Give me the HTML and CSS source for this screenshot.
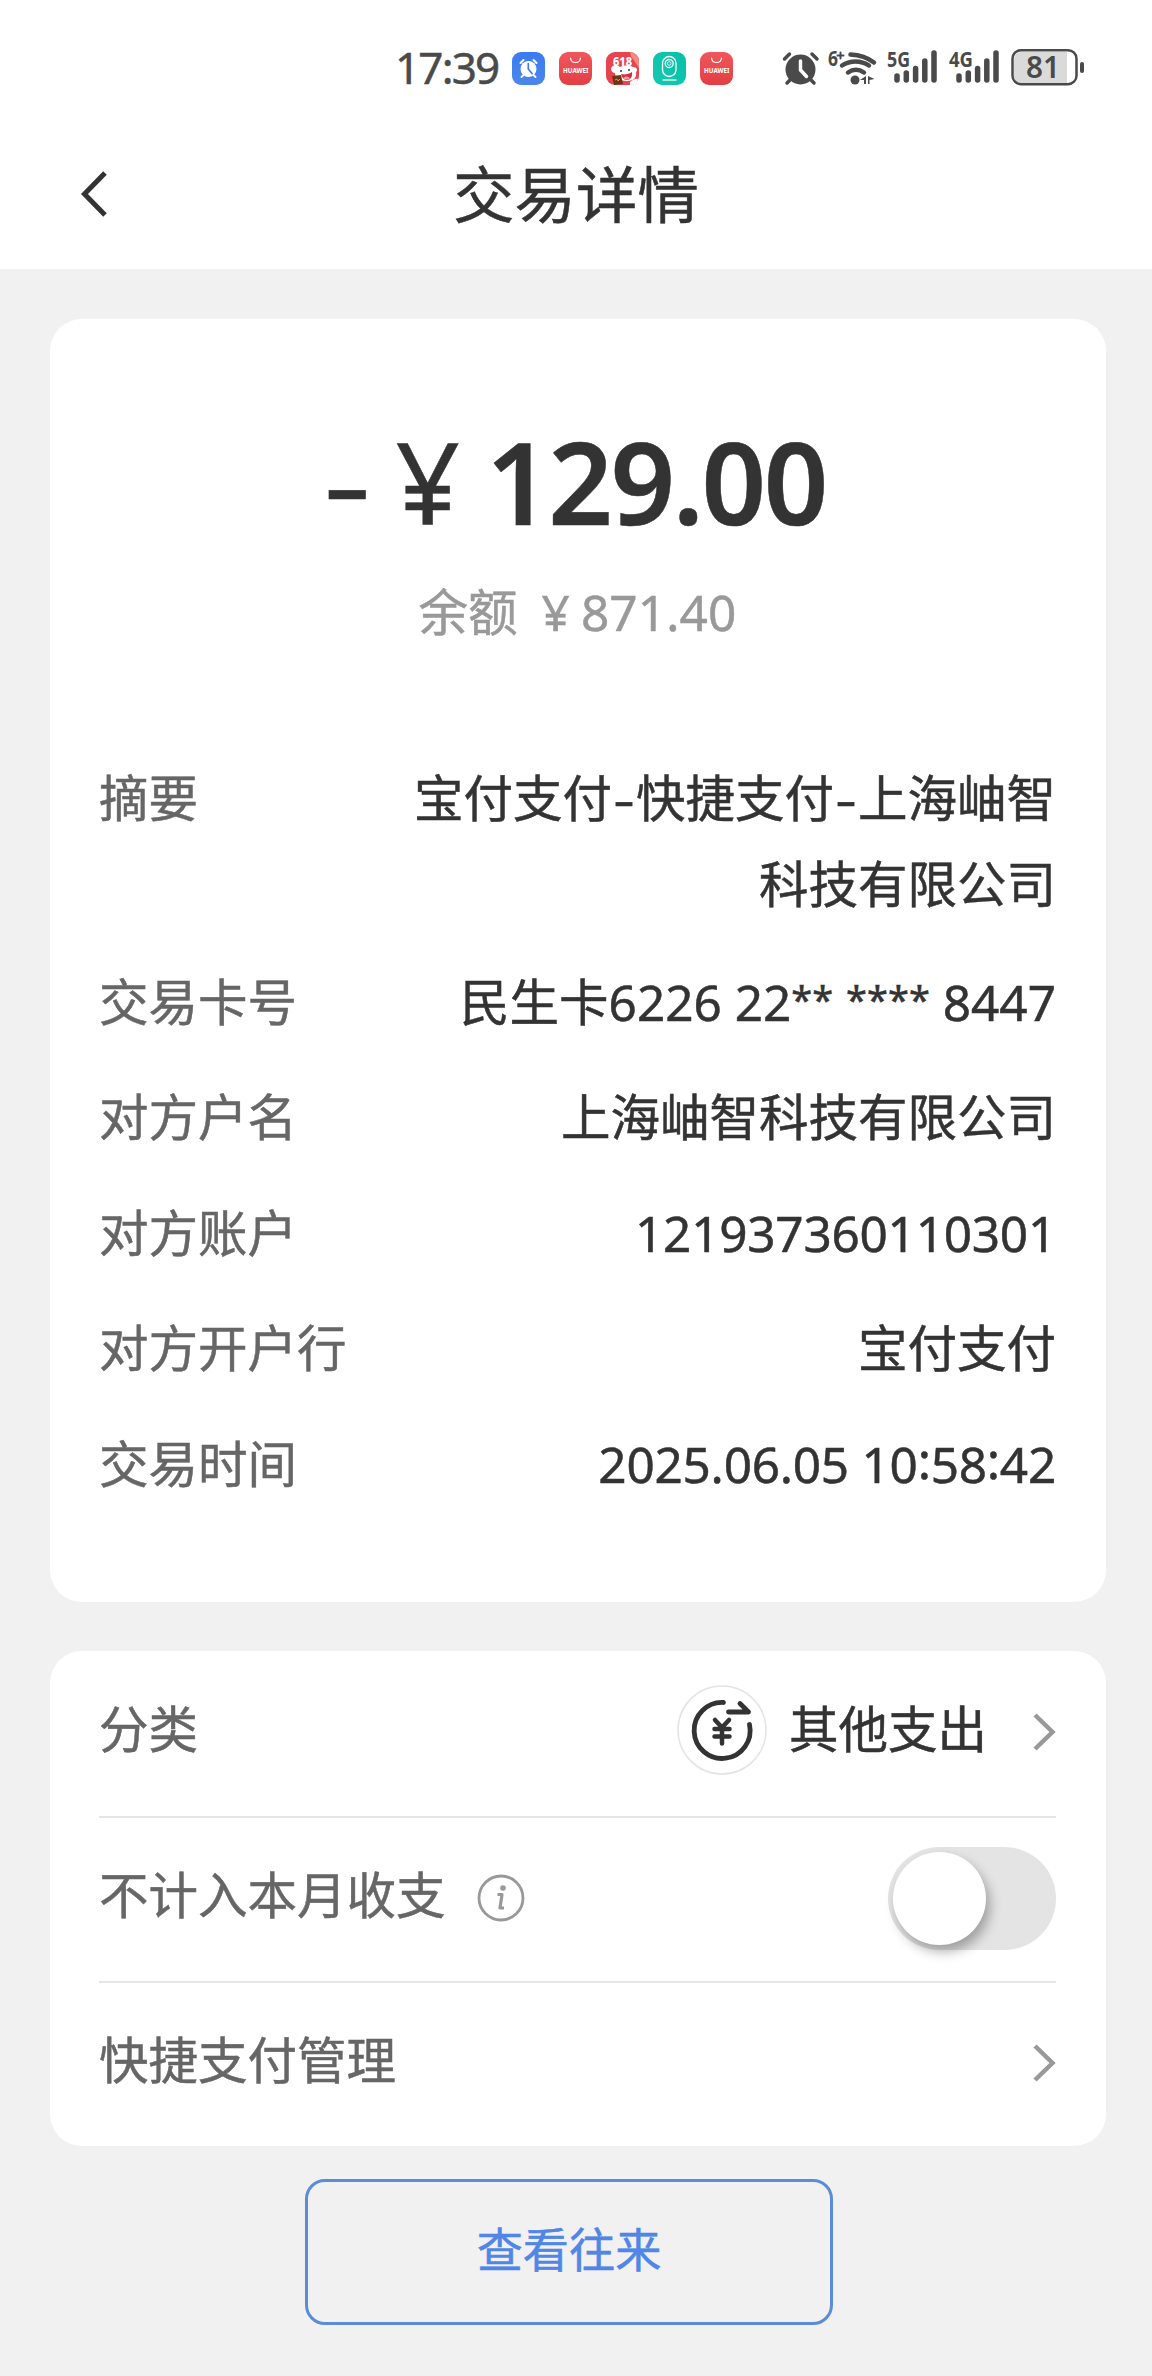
FILE: index.html
```html
<!DOCTYPE html>
<html lang="zh-CN">
<head>
<meta charset="utf-8">
<title>交易详情</title>
<link rel="stylesheet" href="styles.css">
</head>
<body>
<div class="statusbar">
  <span class="clock">17:39</span>
  <div class="apps">
    <svg class="app" viewBox="0 0 33 33">
      <defs><linearGradient id="blue" x1="0" y1="0" x2="0" y2="1"><stop offset="0" stop-color="#3a7bf0"/><stop offset="1" stop-color="#4b86ea"/></linearGradient></defs>
      <rect width="33" height="33" rx="9" fill="url(#blue)"/>
      <circle cx="16.500" cy="17" r="8" fill="#fff"/>
      <path d="M8.500 11l3-3M24.500 11l-3-3M11 23.500l-1.500 1.500M22 23.500l1.500 1.500" stroke="#fff" stroke-width="2" stroke-linecap="round"/>
      <path d="M16.300 11.500v5.500l3.700 4.500" fill="none" stroke="#3f7de8" stroke-width="1.700" stroke-linecap="round"/>
    </svg>
    <svg class="app" viewBox="0 0 33 33">
      <defs><linearGradient id="red" x1="0" y1="0" x2="0" y2="1"><stop offset="0" stop-color="#f0575c"/><stop offset="1" stop-color="#e23e44"/></linearGradient></defs>
      <rect width="33" height="33" rx="9" fill="url(#red)"/>
      <path d="M11.500 6c.5 6 9.500 6 10 0" fill="none" stroke="#fff" stroke-width="1.200" stroke-linecap="round"/>
      <text x="4" y="21" class="brand" textLength="25.500" lengthAdjust="spacingAndGlyphs">HUAWEI</text>
    </svg>
    <svg class="app" viewBox="0 0 33 33">
      <rect width="33" height="33" rx="9" fill="#e84450"/>
      <path d="M24 0a9 9 0 0 1 9 9v7L25 4z" fill="#f68a80"/>
      <path d="M5 17c1-5 6-5 9-2 4-2 9-2 13 0 4 0 5 3 3 5 1 5-2 9-9 9-7 0-12-3-12-8-2 0-4-2-4-4z" fill="#fff"/>
      <path d="M15 22c4 1 8 0 11-2 1 5-2 8-5 8s-5-2-6-6z" fill="#d52b3b"/>
      <path d="M17 26c2-2 5-2 7 0-2 2-5 2-7 0z" fill="#ff9aa0"/>
      <circle cx="15" cy="19" r="1" fill="#333"/><circle cx="23" cy="18" r="1" fill="#333"/>
      <path d="M6 24l9-1 2 9-9 1z" fill="#6e3418"/><path d="M9 28l2-1 1 2 2-2" stroke="#d99a4a" fill="none"/>
      <path d="M24 30c3-2 5-4 8-3-1 3-3 6-8 6z" fill="#fff"/>
      <text x="7" y="14" class="promo" textLength="19" lengthAdjust="spacingAndGlyphs">618</text>
    </svg>
    <svg class="app" viewBox="0 0 33 33">
      <defs><linearGradient id="teal" x1="1" y1="0" x2="0" y2="1"><stop offset="0" stop-color="#08bfa8"/><stop offset="1" stop-color="#13c9b2"/></linearGradient></defs>
      <rect width="33" height="33" rx="9" fill="url(#teal)"/>
      <g fill="none" stroke="#fff" stroke-width="1.300"><rect x="9.500" y="4.500" width="13.500" height="20" rx="6.700"/><circle cx="16.200" cy="11.500" r="4"/><circle cx="16.200" cy="11.500" r="1.800" stroke-width=".8"/><path d="M9.500 28h14"/></g>
    </svg>
    <svg class="app" viewBox="0 0 33 33">
      <rect width="33" height="33" rx="9" fill="url(#red)"/>
      <path d="M11.500 6c.5 6 9.500 6 10 0" fill="none" stroke="#fff" stroke-width="1.200" stroke-linecap="round"/>
      <text x="4" y="21" class="brand" textLength="25.500" lengthAdjust="spacingAndGlyphs">HUAWEI</text>
    </svg>
  </div>
  <svg class="system" width="304" height="54" viewBox="0 -12 304 54" fill="none" stroke="#4a4a4a" stroke-linecap="round">
    <g stroke-width="3.500">
      <circle cx="18.500" cy="20.500" r="15" fill="#4a4a4a" stroke="none"/>
      <path d="M2.500 10l5-5M35 10l-5-5M8 31l-3 3M29 31l3 3"/>
      <path d="M18.500 12v9l6 6.500" stroke="#fff"/>
    </g>
    <g stroke-width="4.500">
      <path d="M68.500 5.500c9 .5 17 3 23.500 8M60 16.500c8-5.500 19-5.500 27 0M66 23.500c5-3.500 11-3.500 16 0"/>
      <circle cx="73" cy="31" r="4.500" fill="#4a4a4a" stroke="none"/>
      <path d="M84 27v8h-2v-4h-4zM86 27v8h1.500v-4l5-1z" fill="#4a4a4a" stroke="none"/>
    </g>
    <g class="net" fill="#4a4a4a" stroke="none">
      <text x="46" y="17" textLength="10" lengthAdjust="spacingAndGlyphs">6</text>
      <text x="105" y="17.500" textLength="23" lengthAdjust="spacingAndGlyphs">5G</text>
      <text x="167" y="17.500" textLength="24" lengthAdjust="spacingAndGlyphs">4G</text>
    </g>
    <path stroke-width="2" d="M58.500 3.500v6M55.500 6.500h6"/>
    <path stroke-width="5.500" d="M115 27v4M124.300 24v7M133.600 19.500v11.500M142.800 12v19M152 4v27"/>
    <path stroke-width="5.500" d="M177 27v4M186.300 24v7M195.600 19.500v11.500M204.800 12v19M214 4v27"/>
    <path d="M239 3h46v31h-46a7 7 0 0 1-7-7v-17a7 7 0 0 1 7-7z" fill="#dadada" stroke="none"/>
    <rect x="230.500" y="1.200" width="64" height="34" rx="8.500" stroke-width="2.500"/>
    <path d="M300 15v7" stroke-width="4"/>
    <text x="244" y="29" class="level" textLength="34" lengthAdjust="spacingAndGlyphs">81</text>
  </svg>
</div>

<header class="navbar">
  <svg class="back" width="30" height="48" viewBox="0 0 30 48"><path d="M26 3L5.500 24l20.500 21" fill="none" stroke="#333" stroke-width="5"/></svg>
  <h1 class="title">交易详情</h1>
</header>

<main class="content">
  <section class="card detail">
    <div class="amount"><span class="minus">-</span><span class="yen">¥</span><strong class="sum">129.00</strong></div>
    <div class="balance"><span>余额</span><span class="balance-sum">¥<span class="digits">871.40</span></span></div>
    <dl class="facts">
      <div class="fact fact-summary"><dt>摘要</dt><dd>宝付支付<span class="dash">-</span>快捷支付<span class="dash">-</span>上海岫智<br>科技有限公司</dd></div>
      <div class="fact"><dt>交易卡号</dt><dd>民生卡6226 22<span class="stars">**</span> <span class="stars">****</span> 8447</dd></div>
      <div class="fact"><dt>对方户名</dt><dd>上海岫智科技有限公司</dd></div>
      <div class="fact"><dt>对方账户</dt><dd class="number">121937360110301</dd></div>
      <div class="fact"><dt>对方开户行</dt><dd>宝付支付</dd></div>
      <div class="fact"><dt>交易时间</dt><dd class="number">2025.06.05 10<span class="colon">:</span>58<span class="colon">:</span>42</dd></div>
    </dl>
  </section>

  <section class="card options">
    <div class="option">
      <span class="label">分类</span>
      <svg class="category" width="90" height="90" viewBox="0 0 90 90" fill="none" stroke="#333" stroke-linecap="round" stroke-linejoin="round">
        <circle cx="45" cy="45" r="44" stroke="#e4e4e4" stroke-width="1.500"/>
        <path d="M46.500 17.500A28 28 0 1 0 72.500 39.500" stroke-width="4.800"/>
        <path d="M51.500 27H71.500L63 18.500" stroke-width="4.800"/>
        <path d="M38 35l7 7.500 7-7.500M45 43v15.500M37.500 44h15M37.500 51.500h15" stroke-width="4.500"/>
      </svg>
      <span class="value">其他支出</span>
      <svg class="chevron" width="24" height="38" viewBox="0 0 24 38"><path d="M3 2l17.500 17L3 36" fill="none" stroke="#999" stroke-width="4.500"/></svg>
    </div>
    <div class="option">
      <span class="label">不计入本月收支</span>
      <svg class="info" width="48" height="48" viewBox="0 0 48 48" fill="none" stroke="#999"><circle cx="24" cy="24" r="22" stroke-width="2.800"/><path d="M20.500 20.500h4.500l-2 13.500h4" stroke-width="3.200" stroke-linejoin="round"/><circle cx="26" cy="14" r="2.800" fill="#999" stroke="none"/></svg>
      <span class="toggle"><span class="knob"></span></span>
    </div>
    <div class="option">
      <span class="label">快捷支付管理</span>
      <svg class="chevron last" width="24" height="38" viewBox="0 0 24 38"><path d="M3 2l17.500 17L3 36" fill="none" stroke="#999" stroke-width="4.500"/></svg>
    </div>
  </section>

  <button class="history" type="button">查看往来</button>
</main>
</body>
</html>
```
FILE: styles.css
```css
* { box-sizing: border-box; }

body {
  margin: 0;
  width: 1152px;
  height: 2376px;
  overflow: hidden;
  background: #f1f1f1;
  color: #333;
  font-family: "Noto Sans", "Noto Sans CJK SC", sans-serif;
  font-size: 49.5px;
  -webkit-text-stroke: 0.5px currentColor;
}

svg text { -webkit-text-stroke: 0; }

.statusbar {
  display: flex;
  align-items: flex-start;
  height: 118px;
  padding: 37px 0 0 395px;
  background: #fff;
}
.clock {
  width: 117px;
  padding-top: 10px;
  font-size: 44px;
  line-height: 40px;
  letter-spacing: -1.8px;
  color: #4a4a4a;
  white-space: nowrap;
}
.apps { display: flex; gap: 14px; padding-top: 15px; }
.app { display: block; width: 33px; height: 33px; }
.system { display: block; margin-left: 49px; }
.brand { font: 700 6.5px "Noto Sans", sans-serif; fill: #fff; }
.promo { font: 800 13px "Noto Sans", sans-serif; fill: #fff; }
.net text { font: 700 22px "Noto Sans", sans-serif; }
.level { font: 600 30px "Noto Sans", sans-serif; fill: #4a4a4a; stroke: none; }

.navbar {
  display: grid;
  grid-template-columns: 200px 1fr 200px;
  align-items: center;
  height: 151px;
  background: #fff;
}
.back { margin: 0 0 0 79px; }
.title {
  margin: 0;
  font-size: 61.5px;
  font-weight: 400;
  line-height: 90px;
  text-align: center;
}

.content { padding: 50px 46px 0 50px; }
.card { border-radius: 32px; background: #fff; padding: 0 50px 0 49px; }

.detail { height: 1283px; padding-top: 97px; }
.amount {
  display: flex;
  justify-content: center;
  height: 130px;
  font-size: 113px;
  line-height: 130px;
}
.minus { margin-right: 30px; transform: scaleX(1.33); }
.yen { margin-right: 26px; }
.sum { font-weight: 600; letter-spacing: -2.4px; }
.balance {
  display: flex;
  justify-content: center;
  gap: 24px;
  height: 86px;
  margin-top: 23px;
  line-height: 86px;
  color: #999;
}
.digits { margin-left: 11px; letter-spacing: 0.1px; }

.facts { margin: 100px 0 0; }
.fact {
  display: flex;
  justify-content: space-between;
  margin-bottom: 29.4px;
  line-height: 86px;
  white-space: nowrap;
}
.fact-summary { margin-bottom: 32px; }
.fact dt { color: #666; }
.fact dd { margin: 0; text-align: right; }
.fact .number { letter-spacing: -0.25px; }
.dash {
  display: inline-block;
  width: 24px;
  text-align: center;
  transform: scaleX(1.35);
}
.stars { font-size: 38px; line-height: 1; vertical-align: 7px; }
.colon { position: relative; top: -4px; }

.options { height: 495px; margin-top: 49px; }
.option { display: flex; align-items: center; height: 165px; padding-bottom: 3px; }
.option + .option { border-top: 2px solid #e6e6e6; }
.label { color: #666; line-height: 86px; margin-top: -6px; }
.category { margin: -4px 22px 0 auto; }
.value { line-height: 86px; margin-top: -6px; }
.chevron { margin: -1px 0 0 45px; }
.chevron.last { margin-left: auto; }
.info { margin-left: 31px; }
.toggle {
  display: flex;
  width: 168px;
  height: 103px;
  margin-left: auto;
  padding: 5px;
  border-radius: 52px;
  background: #e4e4e4;
}
.knob {
  width: 93px;
  height: 93px;
  border-radius: 50%;
  background: #fff;
  box-shadow: 4px 7px 12px rgba(0, 0, 0, .3);
}

.history {
  display: block;
  width: 528px;
  height: 146px;
  margin: 33px 0 0 255px;
  padding: 0 0 11px;
  border: 3px solid #5b8cd8;
  border-radius: 20px;
  background: transparent;
  color: #5086e6;
  font: inherit;
  font-size: 46.2px;
}
```
